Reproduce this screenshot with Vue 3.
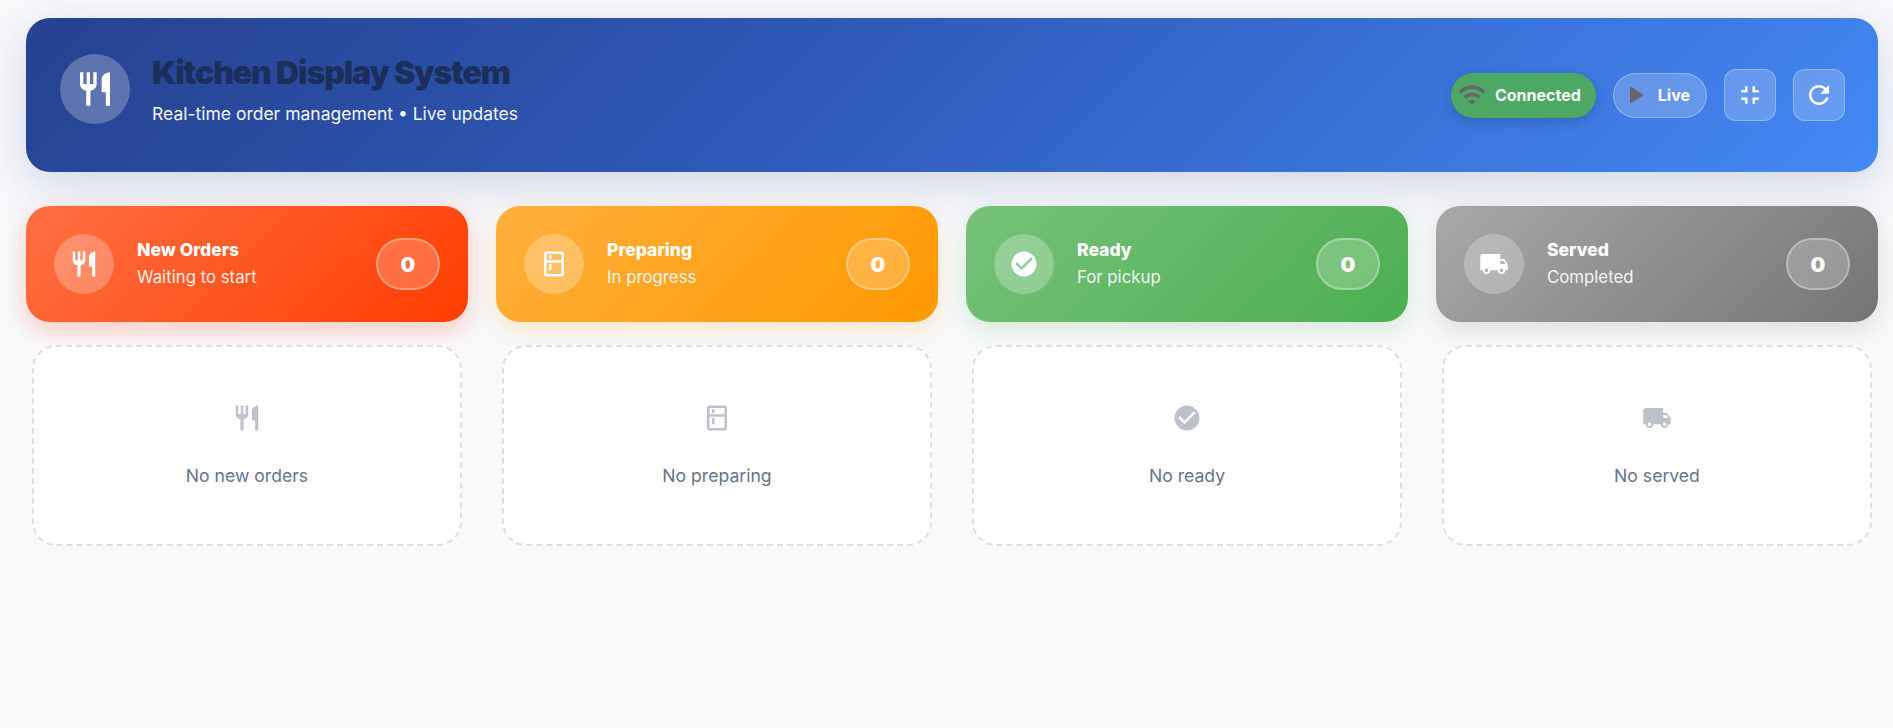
<template>
  <div class="page">
    <header class="top-bar">
      <div class="brand">
        <div class="brand-icon">
          <svg viewBox="0 0 24 24" class="icon-lg"><path :d="icons.restaurant" /></svg>
        </div>
        <div>
          <h1>Kitchen Display System</h1>
          <p>Real-time order management • Live updates</p>
        </div>
      </div>
      <div class="controls">
        <div class="chip connected">
          <svg viewBox="0 0 24 24" class="icon chip-icon"><path :d="icons.wifi" /></svg>
          <span>Connected</span>
        </div>
        <div class="chip live">
          <svg viewBox="0 0 24 24" class="icon chip-icon"><path :d="icons.play" /></svg>
          <span>Live</span>
        </div>
        <button class="square-btn">
          <svg viewBox="0 0 24 24" class="icon"><path :d="icons.exit" /></svg>
        </button>
        <button class="square-btn">
          <svg viewBox="0 0 24 24" class="icon"><path :d="icons.refresh" /></svg>
        </button>
      </div>
    </header>

    <div class="board">
      <section v-for="col in columns" :key="col.title" class="column">
        <div class="stat" :class="col.tone">
          <div class="stat-icon">
            <svg viewBox="0 0 24 24" class="icon"><path :d="col.icon" /></svg>
          </div>
          <div class="stat-text">
            <h2>{{ col.title }}</h2>
            <p>{{ col.sub }}</p>
          </div>
          <div class="count">0</div>
        </div>
        <div class="empty">
          <svg viewBox="0 0 24 24" class="icon"><path :d="col.icon" /></svg>
          <p>{{ col.empty }}</p>
        </div>
      </section>
    </div>
  </div>
</template>

<script setup>
const icons = {
  restaurant: 'M11 9H9V2H7v7H5V2H3v7c0 2.12 1.66 3.84 3.75 3.97V22h2.5v-9.03C11.34 12.84 13 11.12 13 9V2h-2v7zm5-3v8h2.5v8H21V2c-2.76 0-5 2.24-5 4z',
  kitchen: 'M18 2.01 6 2c-1.1 0-2 .89-2 2v16c0 1.1.9 2 2 2h12c1.1 0 2-.9 2-2V4c0-1.11-.9-1.99-2-1.99zM18 20H6v-9.02h12V20zm0-11H6V4h12v5zM8 5h2v3H8zm0 7h2v5H8z',
  check: 'M12 2C6.48 2 2 6.48 2 12s4.48 10 10 10 10-4.48 10-10S17.52 2 12 2zm-2 15l-5-5 1.41-1.41L10 14.17l7.59-7.59L19 8l-9 9z',
  truck: 'M20 8h-3V4H3c-1.1 0-2 .9-2 2v11h2c0 1.66 1.34 3 3 3s3-1.34 3-3h6c0 1.66 1.34 3 3 3s3-1.34 3-3h2v-5l-3-4zM6 18.5c-.83 0-1.5-.67-1.5-1.5s.67-1.5 1.5-1.5 1.5.67 1.5 1.5-.67 1.5-1.5 1.5zm13.5-9l1.96 2.5H17V9.5h2.5zm-1.5 9c-.83 0-1.5-.67-1.5-1.5s.67-1.5 1.5-1.5 1.5.67 1.5 1.5-.67 1.5-1.5 1.5z',
  wifi: 'M1 9l2 2c4.97-4.97 13.03-4.97 18 0l2-2C16.93 2.93 7.08 2.93 1 9zm8 8l3 3 3-3c-1.65-1.66-4.34-1.66-6 0zm-4-4l2 2c2.76-2.76 7.24-2.76 10 0l2-2C15.14 9.14 8.87 9.14 5 13z',
  play: 'M8 5v14l11-7z',
  exit: 'M5 16h3v3h2v-5H5v2zm3-8H5v2h5V5H8v3zm6 11h2v-3h3v-2h-5v5zm2-11V5h-2v5h5V8h-3z',
  refresh: 'M17.65 6.35C16.2 4.9 14.21 4 12 4c-4.42 0-7.99 3.58-7.99 8s3.57 8 7.99 8c3.73 0 6.84-2.55 7.73-6h-2.08c-.82 2.33-3.04 4-5.65 4-3.31 0-6-2.69-6-6s2.69-6 6-6c1.66 0 3.14.69 4.22 1.78L13 11h7V4l-2.35 2.35z'
}

const columns = [
  { title: 'New Orders', sub: 'Waiting to start', empty: 'No new orders', tone: 'red', icon: icons.restaurant },
  { title: 'Preparing', sub: 'In progress', empty: 'No preparing', tone: 'orange', icon: icons.kitchen },
  { title: 'Ready', sub: 'For pickup', empty: 'No ready', tone: 'green', icon: icons.check },
  { title: 'Served', sub: 'Completed', empty: 'No served', tone: 'grey', icon: icons.truck }
]
</script>

<style>
body { margin: 0; background: #f8f9fb; }
</style>

<style scoped>
.page {
  min-height: 100vh;
  box-sizing: border-box;
  padding: 18px 15px 0 26px;
  background: #f8f9fb;
  font-family: Inter, sans-serif;
}
.icon { width: 30px; height: 30px; fill: currentColor; flex: none; display: block; }
.icon-lg { width: 40px; height: 40px; fill: currentColor; display: block; }

.top-bar {
  display: flex;
  align-items: center;
  justify-content: space-between;
  padding: 36px 33px 36px 34px;
  border-radius: 24px;
  color: #fff;
  background: linear-gradient(135deg, #26418e 0%, #2d58b6 40%, #4488f5 100%);
  box-shadow: 0 12px 48px rgba(30, 58, 138, 0.18);
}
.brand { display: flex; gap: 22px; height: 82px; }
.brand-icon {
  width: 70px;
  height: 70px;
  border-radius: 50%;
  background: rgba(255, 255, 255, 0.25);
  display: flex;
  align-items: center;
  justify-content: center;
}
h1 {
  margin: 0;
  padding-top: 1px;
  font-size: 32px;
  line-height: 36px;
  font-weight: 900;
  letter-spacing: -1.1px;
  color: #1c2e5c;
}
.brand p { margin: 11px 0 0; font-size: 17.5px; line-height: 24px; opacity: 0.95; }

.controls { display: flex; align-items: center; gap: 17px; }
.chip {
  display: flex;
  align-items: center;
  gap: 8px;
  height: 45px;
  box-sizing: border-box;
  border-radius: 22.5px;
  font-size: 16px;
  font-weight: 700;
}
.chip-icon { color: #666; }
.connected {
  padding: 0 15px 0 6px;
  background: #4ca863;
  box-shadow: 0 4px 12px rgba(0, 0, 0, 0.15);
}
.live {
  padding: 0 16px 0 6px;
  background: rgba(255, 255, 255, 0.2);
  border: 1px solid rgba(255, 255, 255, 0.3);
}
.square-btn {
  width: 52px;
  height: 52px;
  padding: 0;
  box-sizing: border-box;
  display: flex;
  align-items: center;
  justify-content: center;
  color: #fff;
  border-radius: 12px;
  background: rgba(255, 255, 255, 0.2);
  border: 1px solid rgba(255, 255, 255, 0.3);
}

.board {
  display: grid;
  grid-template-columns: repeat(4, 1fr);
  gap: 28px;
  margin-top: 34px;
}
.stat {
  display: flex;
  align-items: center;
  height: 116px;
  box-sizing: border-box;
  padding: 0 28px;
  border-radius: 24px;
  color: #fff;
}
.red { background: linear-gradient(135deg, #ff7043, #ff3d00); box-shadow: 0 8px 24px rgba(255, 61, 0, 0.25); }
.orange { background: linear-gradient(135deg, #ffb03d, #ff9800); box-shadow: 0 8px 24px rgba(255, 152, 0, 0.2); }
.green { background: linear-gradient(135deg, #76c27a, #4caf50); box-shadow: 0 8px 24px rgba(76, 175, 80, 0.2); }
.grey { background: linear-gradient(135deg, #a8a8a8, #757575); box-shadow: 0 8px 24px rgba(117, 117, 117, 0.2); }
.stat-icon {
  width: 60px;
  height: 60px;
  border-radius: 50%;
  background: rgba(255, 255, 255, 0.25);
  display: flex;
  align-items: center;
  justify-content: center;
  flex: none;
}
.stat-text { flex: 1; margin-left: 23px; padding-bottom: 2px; }
.stat-text h2 { margin: 0; font-size: 17.5px; line-height: 24px; font-weight: 800; }
.stat-text p { margin: 3px 0 0; font-size: 16.8px; line-height: 24px; opacity: 0.9; }
.count {
  width: 64px;
  height: 52px;
  box-sizing: border-box;
  border-radius: 26px;
  border: 2px solid rgba(255, 255, 255, 0.3);
  background: rgba(255, 255, 255, 0.22);
  display: flex;
  align-items: center;
  justify-content: center;
  font-size: 20.8px;
  font-weight: 900;
}
.empty {
  margin: 23px 6px 0;
  height: 201px;
  box-sizing: border-box;
  display: flex;
  flex-direction: column;
  align-items: center;
  padding-top: 56px;
  background: #fff;
  border: 2px dashed #e0e0e0;
  border-radius: 24px;
  color: #bcc1cc;
}
.empty p { margin: 30px 0 0; font-size: 17.6px; line-height: 26px; color: #64748b; }
</style>
